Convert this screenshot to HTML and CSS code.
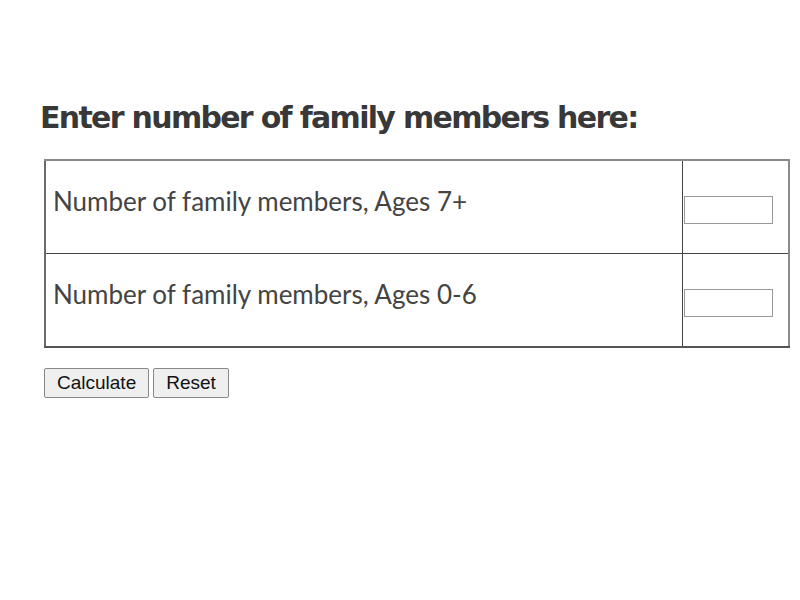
FILE: index.html
```html
<!DOCTYPE html>
<html>
<head>
<meta charset="utf-8">
<link rel="stylesheet" href="styles.css">
</head>
<body>
<div class="page">
  <h2 class="title">Enter number of family members here:</h2>
  <form class="form">
    <table class="members">
      <tr>
        <td class="label">Number of family members, Ages 7+</td>
        <td class="field"><input type="text" class="num"></td>
      </tr>
      <tr>
        <td class="label">Number of family members, Ages 0-6</td>
        <td class="field"><input type="text" class="num"></td>
      </tr>
    </table>
    <div class="buttons">
      <button type="button" class="btn">Calculate</button>
      <button type="reset" class="btn">Reset</button>
    </div>
  </form>
</div>
</body>
</html>
```
FILE: styles.css
```css
html, body {
  margin: 0;
  padding: 0;
  background: #fff;
}
.page {
  padding: 98px 0 0 40px;
}
.title {
  margin: 0;
  font-family: "DejaVu Sans", sans-serif;
  font-weight: bold;
  font-size: 30px;
  letter-spacing: -1.7px;
  color: #383838;
  line-height: 40px;
}
.form {
  margin: 21px 0 0 4px;
}
.members {
  width: 746px;
  border-collapse: collapse;
  border-top: 2px solid #8a8a8a;
  border-left: 2px solid #6a6a6a;
  border-right: 2px solid #8a8a8a;
  border-bottom: 2px solid #555;
}
.members td {
  border: 1px solid #444;
  height: 57px;
  padding: 0;
}
.label {
  font-family: Lato, sans-serif;
  font-size: 26px;
  color: #444;
  vertical-align: top;
  padding: 24px 0 0 7px !important;
}
.field {
  width: 104px;
  vertical-align: top;
  padding: 35px 0 0 1px !important;
}
.num {
  display: block;
  box-sizing: border-box;
  width: 89px;
  height: 28px;
  margin: 0;
  border: 1px solid #999;
  padding: 0;
}
.buttons {
  display: flex;
  gap: 4px;
  margin-top: 20px;
}
.btn {
  font-family: "Liberation Sans", Arial, sans-serif;
  font-size: 19px;
  color: #111;
  background: #efefef;
  border: 1px solid #888;
  border-radius: 2px;
  height: 30px;
  padding: 0 12px;
}
```
